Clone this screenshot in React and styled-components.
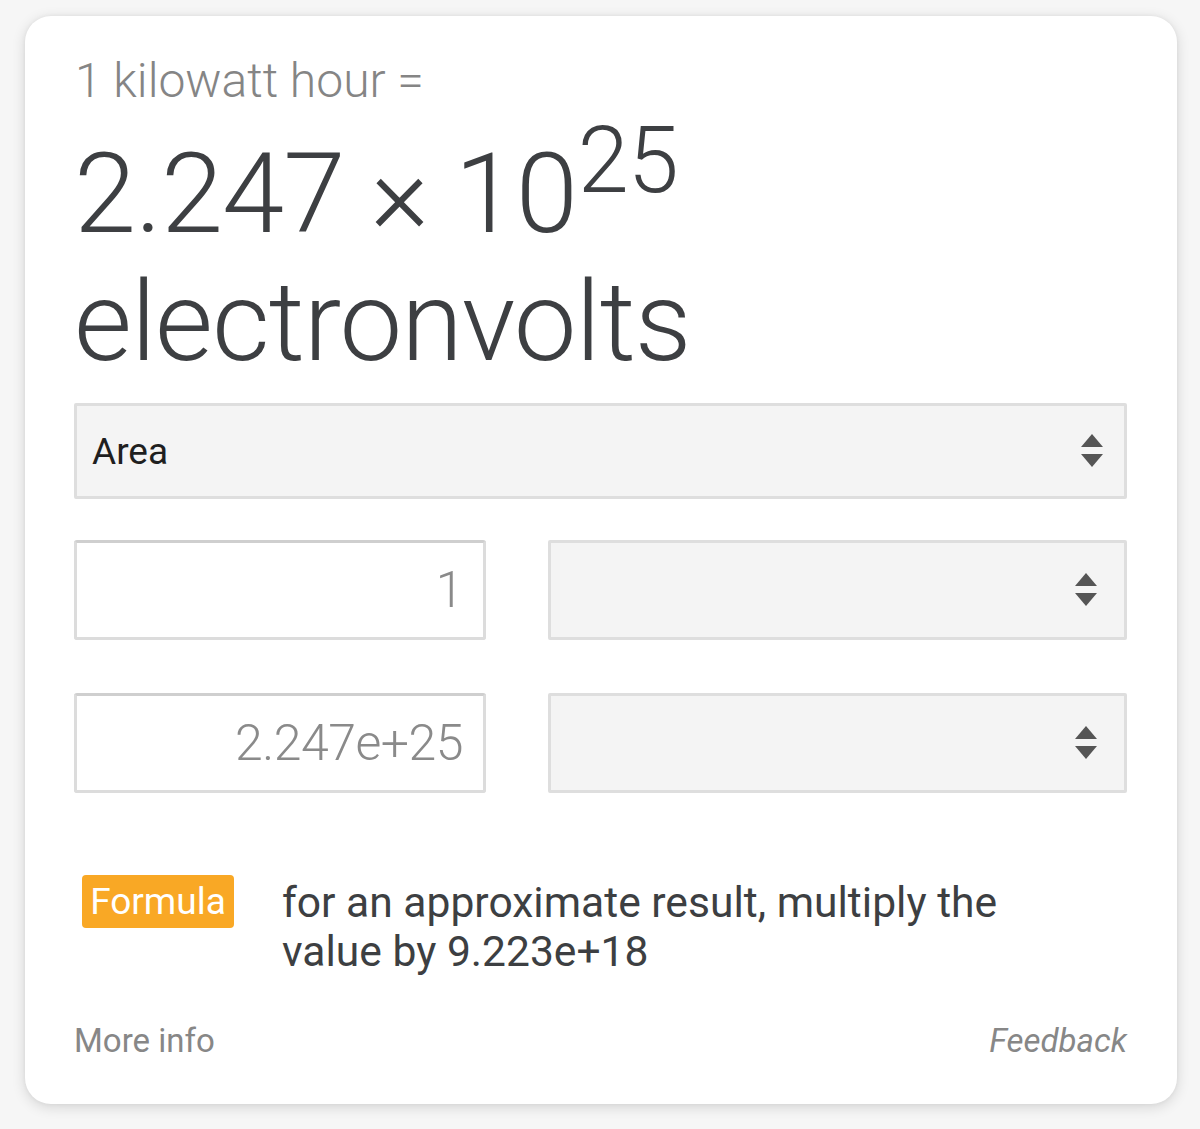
import React from "react";
import styled, { createGlobalStyle } from "styled-components";

const Global = createGlobalStyle`
  html, body { margin: 0; padding: 0; background: #f6f6f6; }
  body { font-family: Roboto, "Noto Sans", sans-serif; }
  * { box-sizing: border-box; }
`;

const Page = styled.div`
  padding: 16px 23px 25px 25px;
`;

const Card = styled.div`
  width: 1152px;
  height: 1088px;
  background: #fff;
  border-radius: 26px;
  box-shadow: 0 3px 14px rgba(0, 0, 0, 0.14), 0 0 4px rgba(0, 0, 0, 0.05);
  padding: 41px 50px 0 49px;
  display: flex;
  flex-direction: column;
`;

const Title = styled.div`
  font-size: 48px;
  line-height: 48px;
  font-weight: 300;
  color: #858585;
  margin-left: 1px;
`;

const Result = styled.div`
  margin-top: 25px;
  font-size: 112px;
  line-height: 128px;
  font-weight: 300;
  color: #3d3f42;
  letter-spacing: -1px;
`;

const Sup = styled.span`
  font-size: 92px;
  line-height: 0;
  vertical-align: 40px;
  margin-left: 1px;
`;

const Block = styled.div`
  margin-top: ${(p) => p.$mt}px;
`;

const SelectBox = styled.div`
  display: flex;
  align-items: center;
  justify-content: space-between;
  height: ${(p) => p.$h}px;
  background: #f4f4f4;
  border: 3px solid #dedede;
  border-radius: 2px;
  padding: 0 ${(p) => p.$pr}px 0 15px;
  font-size: 37px;
  color: #1f1f1f;
`;

const Grid = styled.div`
  display: grid;
  grid-template-columns: 412px 579px;
  column-gap: 62px;
  margin-top: ${(p) => p.$mt}px;
`;

const InputBox = styled.div`
  height: 100px;
  border: 3px solid #dcdcdc;
  border-top-color: #cfcfcf;
  border-radius: 3px;
  background: #fff;
  display: flex;
  align-items: center;
  justify-content: flex-end;
  padding-right: 20px;
  font-size: 50px;
  font-weight: 300;
  color: #8a8a8a;
  letter-spacing: -0.5px;
`;

const FormulaRow = styled.div`
  display: flex;
  align-items: flex-start;
  margin-top: 82px;
`;

const Badge = styled.div`
  margin-left: 8px;
  width: 152px;
  height: 53px;
  background: #f9a825;
  color: #fff;
  border-radius: 4px;
  font-size: 37px;
  line-height: 53px;
  text-align: center;
  flex-shrink: 0;
`;

const FormulaText = styled.div`
  margin-left: 48px;
  margin-top: 3px;
  font-size: 42.6px;
  line-height: 49px;
  color: #3d3f42;
  width: 760px;
`;

const Footer = styled.div`
  margin-top: auto;
  margin-bottom: 44px;
  display: flex;
  justify-content: space-between;
  align-items: baseline;
  font-size: 33px;
  color: #878787;
`;

const Feedback = styled.span`
  font-style: italic;
`;

const Arrows = () => (
  <svg width="24" height="36" viewBox="0 0 24 36">
    <path d="M12 1 L23 14 L1 14 Z" fill="#555" />
    <path d="M1 21 L23 21 L12 34 Z" fill="#555" />
  </svg>
);

export default function App() {
  return (
    <Page>
      <Global />
      <Card>
        <Title>1 kilowatt hour =</Title>
        <Result>
          2.247 × 10<Sup>25</Sup>
          <br />
          electronvolts
        </Result>
        <Block $mt={17}>
          <SelectBox $h={96} $pr={20}>
            <span>Area</span>
            <Arrows />
          </SelectBox>
        </Block>
        <Grid $mt={41}>
          <InputBox>1</InputBox>
          <SelectBox $h={100} $pr={26}>
            <span />
            <Arrows />
          </SelectBox>
        </Grid>
        <Grid $mt={53}>
          <InputBox>2.247e+25</InputBox>
          <SelectBox $h={100} $pr={26}>
            <span />
            <Arrows />
          </SelectBox>
        </Grid>
        <FormulaRow>
          <Badge>Formula</Badge>
          <FormulaText>
            for an approximate result, multiply the value by 9.223e+18
          </FormulaText>
        </FormulaRow>
        <Footer>
          <span>More info</span>
          <Feedback>Feedback</Feedback>
        </Footer>
      </Card>
    </Page>
  );
}
